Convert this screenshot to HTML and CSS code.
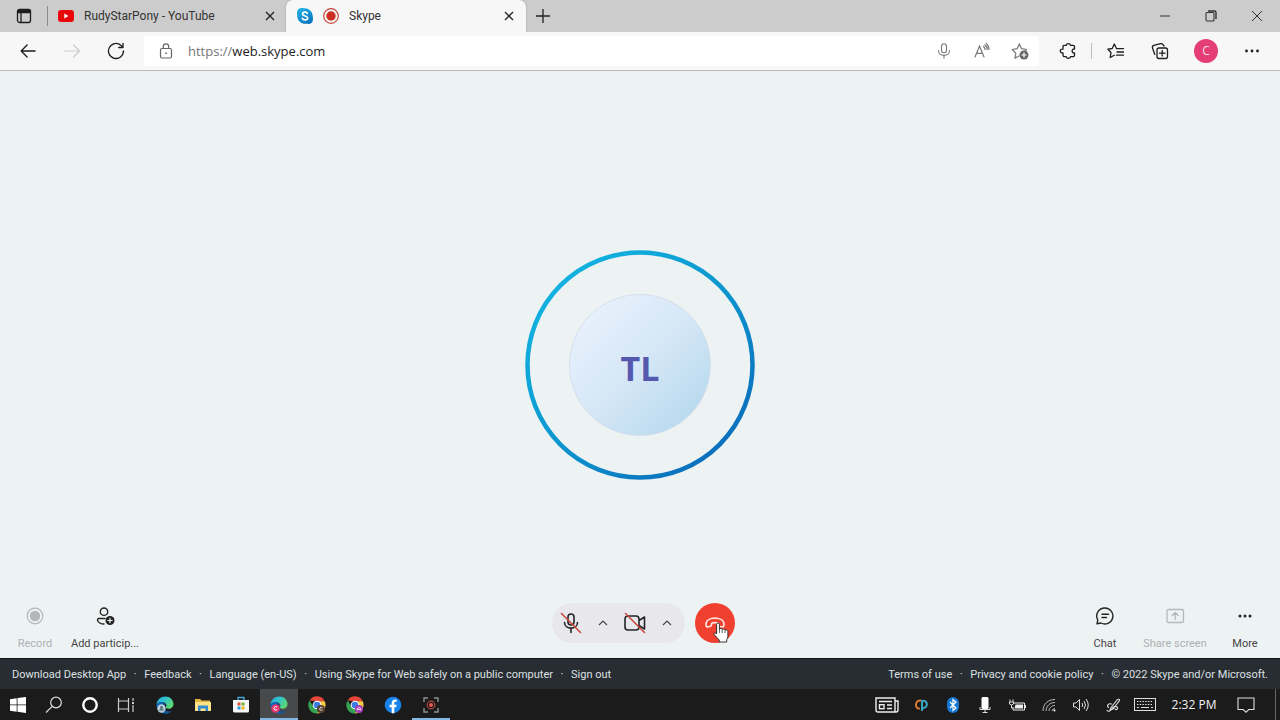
FILE: index.html
```html
<!DOCTYPE html>
<html lang="en">
<head>
<meta charset="utf-8">
<title>Skype</title>
<link rel="stylesheet" href="styles.css">
</head>
<body>
<svg class="defs" aria-hidden="true">
  <defs>
    <linearGradient id="gRing" x1="0.1" y1="0.1" x2="0.85" y2="0.9"><stop offset="0" stop-color="#12b4e2"/><stop offset="0.5" stop-color="#0c97cf"/><stop offset="1" stop-color="#0b6fbd"/></linearGradient>
    <linearGradient id="gSkype" x1="0" y1="0" x2="0.6" y2="1"><stop offset="0" stop-color="#27b5ea"/><stop offset="1" stop-color="#0878c0"/></linearGradient>
    <linearGradient id="gEdge" x1="0" y1="0" x2="1" y2="0.5"><stop offset="0" stop-color="#28a8e0"/><stop offset="0.5" stop-color="#2fc3cf"/><stop offset="1" stop-color="#5bd873"/></linearGradient>
    <symbol id="edge" viewBox="0 0 18 18">
      <path d="M.5 8.5C1 3.8 4.700.5 9.200.5c5 0 8.300 3.600 8.300 7.400 0 3-2.200 4.800-4.900 4.800-2.300 0-3.200-.9-2.600-1.900.6-1.100.5-2.200-.2-3.100C8 5.300 3.500 5.100.5 8.500z" fill="url(#gEdge)"/>
      <path d="M.5 8.500C2 5.800 6 5 8.500 7c-3 1.500-3.500 8 2 9.200 2.300.5 4-.2 5.700-1.500C14 17.200 11.500 17.700 9 17.500 4 17 .3 13.300.5 8.500z" fill="#0f66b8"/>
      <path d="M8.500 7c-3.300 2-3 8.300 2.500 9.400 2.200.3 4-.5 5.300-1.800-4.500 1.800-8.600-.2-7.700-3.900.2-1.300 1-2.200-.1-3.700z" fill="#174b92"/>
    </symbol>
    <symbol id="chrome" viewBox="0 0 18 18">
      <path d="M1.600 4.600A8.500 8.500 0 0 1 16.700 5.300H9z" fill="#e5483b"/>
      <path d="M16.700 5.300A8.500 8.500 0 0 1 8.800 17.500L12.500 11 9 5.300z" fill="#f7cb42"/>
      <path d="M1.600 4.600A8.500 8.500 0 0 0 8.800 17.500l3.700-6.500-7 0z" fill="#35a352"/>
      <circle cx="9" cy="9" r="4.300" fill="#fff"/><circle cx="9" cy="9" r="3.300" fill="#3c7de0"/>
    </symbol>
  </defs>
</svg>

<header class="browser">
  <div class="tabs">
    <button class="tab-actions" aria-label="Tab actions"><svg width="16" height="16" viewBox="0 0 16 16" fill="none" stroke="#1d1d1d" stroke-width="1.300"><rect x="1.500" y="1.500" width="13" height="13" rx="2"/><path d="M1.500 3.500h13" stroke-width="3.500"/><path d="M5 5v9.500"/></svg></button>
    <div class="tab">
      <svg width="16" height="12" viewBox="0 0 16 12"><rect width="16" height="12" rx="3" fill="#e8090d"/><path d="M6.300 3.500v5L10.500 6z" fill="#fff"/></svg>
      <span class="tab-title">RudyStarPony - YouTube</span>
      <button class="tab-close" aria-label="Close tab"><svg width="10" height="10" viewBox="0 0 10 10" stroke="#222" stroke-width="1.300"><path d="M1 1l8 8M9 1L1 9"/></svg></button>
    </div>
    <div class="tab tab-active">
      <svg width="16" height="16" viewBox="0 0 16 16"><path d="M0 4.500C0 2 2 0 4.500 0 5.500 0 6 .2 7 .2 12 0 16 3.500 15.800 9c.2.8.2 1.500.2 2.500 0 2.500-2 4.500-4.500 4.500-1 0-1.500-.2-2.500-.2C4 16 0 12.500.2 7 0 6 0 5.500 0 4.500z" fill="url(#gSkype)"/><path d="M10.400 5.500C9.800 3.500 5.500 3.500 5.500 6c0 2.500 5.200 1.500 5.200 4 0 2.400-4.700 2.500-5.400.3" fill="none" stroke="#fff" stroke-width="1.700" stroke-linecap="round"/></svg>
      <svg class="recording" width="16" height="16" viewBox="0 0 16 16"><circle cx="8" cy="8" r="7.300" fill="none" stroke="#c4473c" stroke-width="1.200"/><circle cx="8" cy="8" r="4.700" fill="#cd2e22"/></svg>
      <span class="tab-title">Skype</span>
      <button class="tab-close" aria-label="Close tab"><svg width="10" height="10" viewBox="0 0 10 10" stroke="#222" stroke-width="1.300"><path d="M1 1l8 8M9 1L1 9"/></svg></button>
    </div>
    <button class="new-tab" aria-label="New tab"><svg width="14" height="14" viewBox="0 0 14 14" stroke="#222" stroke-width="1.300"><path d="M7 0v14M0 7h14"/></svg></button>
    <div class="window-buttons">
      <button aria-label="Minimize"><svg width="12" height="12" viewBox="0 0 12 12" stroke="#333"><path d="M1 6h10"/></svg></button>
      <button aria-label="Restore"><svg width="12" height="12" viewBox="0 0 12 12" fill="none" stroke="#333" stroke-width="1.100"><rect x="1" y="2.500" width="8" height="8.500" rx="1"/><path d="M3 1h6.500Q11 1 11 2.500V9" stroke-width="1.400"/></svg></button>
      <button aria-label="Close window"><svg width="12" height="12" viewBox="0 0 12 12" stroke="#333"><path d="M1 1l10 10M11 1L1 11"/></svg></button>
    </div>
  </div>
  <nav class="toolbar" aria-label="Browser toolbar">
    <button class="tool" aria-label="Back"><svg width="16" height="16" viewBox="0 0 18 18" fill="none" stroke="#1d1d1d" stroke-width="1.500" stroke-linecap="round" stroke-linejoin="round"><path d="M17 9H1.500M8 2.200L1.300 9 8 15.800"/></svg></button>
    <button class="tool" aria-label="Forward" disabled><svg width="18" height="18" viewBox="0 0 18 18" fill="none" stroke="#cdcdcd" stroke-width="1.200" stroke-linecap="round" stroke-linejoin="round"><path d="M1.500 9h15M10.500 3l6 6-6 6"/></svg></button>
    <button class="tool" aria-label="Refresh"><svg width="18" height="18" viewBox="0 0 18 18" fill="none" stroke="#1d1d1d" stroke-width="1.300" stroke-linecap="round" stroke-linejoin="round"><path d="M16.500 9A7.500 7.500 0 1 1 14 3.400L16 5.500M16 1.300v4.200h-4.300"/></svg></button>
    <div class="address">
      <button class="lock" aria-label="Site information"><svg width="14" height="16" viewBox="0 0 14 16" fill="none" stroke="#666" stroke-width="1.200"><rect x="1.500" y="5.500" width="11" height="9.500" rx="1.500"/><path d="M4.300 5.500V3.500a2.700 2.700 0 0 1 5.400 0v2"/><circle cx="7" cy="10.200" r=".9" fill="#666" stroke="none"/></svg></button>
      <a class="url" href="#"><span class="scheme">https://</span>web.skype.com</a>
      <button aria-label="Voice search"><svg width="14" height="16" viewBox="0 0 14 16" fill="none" stroke="#777" stroke-width="1.100" stroke-linecap="round"><rect x="4.500" y=".8" width="5" height="9" rx="2.500"/><path d="M1.500 7.500c0 6.500 11 6.500 11 0M7 12.500v2.800"/></svg></button>
      <button aria-label="Read aloud"><svg width="16" height="16" viewBox="0 0 16 16" fill="none" stroke="#777" stroke-width="1.200" stroke-linecap="round"><path d="M1 14L5.500 3 10 14M2.500 10.300h6M9.500 3.500c1 .8 1.500 1.800 1.500 3M10.800 1.800c1.600 1.300 2.300 2.800 2.300 4.800M12.300.5C14 2 15 4 15 6.500"/></svg></button>
      <button aria-label="Add to favorites"><svg width="18" height="18" viewBox="0 0 18 18" fill="none" stroke="#777" stroke-width="1.200" stroke-linejoin="round"><path d="M8.300 13.800L4 16.200l.8-5.100L1.200 7.500l4.900-.8L8.300 1.900l2.200 4.800 5 .8-1.500 1.700"/><circle cx="13" cy="13" r="4.500" fill="#666" stroke="none"/><path d="M13 10.500v5M10.500 13h5" stroke="#fff"/></svg></button>
    </div>
    <button class="tool" aria-label="Extensions"><svg width="18" height="18" viewBox="0 0 18 18" fill="none" stroke="#1d1d1d" stroke-width="1.300" stroke-linejoin="round"><path d="M5 3.300h2.200a2.200 2.200 0 0 1 4.300 0H14a1.500 1.500 0 0 1 1.500 1.500v2.300c-3.200-.8-3.200 4.600 0 3.800v2.300a1.500 1.500 0 0 1-1.500 1.500h-2.500a2.200 2.200 0 0 1-4.300 0H5.500A1.500 1.500 0 0 1 4 13.200v-2.300c-3.600.4-3.600-4.200 0-3.800V4.800Q4 3.300 5 3.300z"/></svg></button>
    <span class="divider"></span>
    <button class="tool" aria-label="Favorites"><svg width="18" height="18" viewBox="0 0 18 18" fill="none" stroke="#1d1d1d" stroke-width="1.300" stroke-linejoin="round" stroke-linecap="round"><path d="M9.500 6.500L7.300 2 5.200 6.500.9 7.200 4 10.500 3.200 15.500 7.300 13.300M9.500 6.700h7M10 10h6.500M9.500 13.200h7"/></svg></button>
    <button class="tool" aria-label="Collections"><svg width="18" height="18" viewBox="0 0 18 18" fill="none" stroke="#1d1d1d" stroke-width="1.300" stroke-linejoin="round" stroke-linecap="round"><rect x="6" y="6" width="10.500" height="10.500" rx="2"/><path d="M11.200 8.500v5.500M8.500 11.200H14M3.800 12.500L1.500 6Q1 4 2.800 3.300L9.500 1.600Q11 1.300 12 2.600L13 4"/></svg></button>
    <button class="tool profile" aria-label="Profile"><span class="profile-letter">C</span></button>
    <button class="tool" aria-label="Settings and more"><svg width="16" height="4" viewBox="0 0 16 4" fill="#1d1d1d"><circle cx="2.500" cy="2" r="1.400"/><circle cx="8" cy="2" r="1.400"/><circle cx="13.500" cy="2" r="1.400"/></svg></button>
  </nav>
</header>

<main class="call">
  <div class="participant">
    <svg class="ring" width="230" height="230" viewBox="0 0 230 230"><circle cx="115" cy="115" r="112.500" fill="none" stroke="url(#gRing)" stroke-width="4.500"/></svg>
    <div class="initials">TL</div>
  </div>
  <div class="controls">
    <div class="actions">
      <button class="action" disabled><svg width="20" height="20" viewBox="0 0 20 20"><circle cx="10" cy="10" r="7.800" fill="none" stroke="#b5b8ba" stroke-width="1.200"/><circle cx="10" cy="10" r="5.200" fill="#b5b8ba"/></svg><span>Record</span></button>
      <button class="action"><svg width="20" height="20" viewBox="0 0 20 20" fill="none" stroke="#242424" stroke-width="1.400" stroke-linecap="round"><circle cx="9" cy="5.700" r="3.700"/><path d="M10 12.500H4C1 12.500 2.500 18 9 18"/><circle cx="15" cy="14.500" r="4.500" fill="#242424" stroke="none"/><path d="M15 12.300v4.400M12.800 14.500h4.400" stroke="#eef2f4" stroke-width="1.200"/></svg><span>Add particip...</span></button>
    </div>
    <div class="center-controls">
      <div class="pill">
        <button class="device" aria-label="Unmute"><svg width="22" height="22" viewBox="0 0 22 22" fill="none" stroke="#242424" stroke-width="1.600" stroke-linecap="round"><rect x="8" y="2" width="6" height="11" rx="3"/><path d="M4.500 10.500c0 7.500 13 7.500 13 0M11 16.500v4"/><path d="M1.500 1.500l19 19" stroke="#c9473f"/></svg></button>
        <button class="chevron" aria-label="Audio options"><svg width="10" height="6" viewBox="0 0 10 6" fill="none" stroke="#444" stroke-width="1.100"><path d="M1 5L5 1l4 4"/></svg></button>
        <button class="device" aria-label="Turn on video"><svg width="22" height="22" viewBox="0 0 22 22" fill="none" stroke="#242424" stroke-width="1.600" stroke-linejoin="round" stroke-linecap="round"><path d="M4 4h8q3 0 3 3v8q0 3-3 3H4q-3 0-3-3V7q0-3 3-3zM15 8.500l5.500-3.500v12L15 13.500"/><path d="M1.500 1.500l19 19" stroke="#c9473f"/></svg></button>
        <button class="chevron" aria-label="Video options"><svg width="10" height="6" viewBox="0 0 10 6" fill="none" stroke="#444" stroke-width="1.100"><path d="M1 5L5 1l4 4"/></svg></button>
      </div>
      <button class="hangup" aria-label="End call"><svg width="20" height="12" viewBox="0 0 20 12" fill="none" stroke="#ffe3dd" stroke-width="1.700" stroke-linejoin="round"><path d="M1 7.500C1 3 5.500 1.200 10 1.200S19 3 19 7.500c0 3-1.600 2.700-4.500 1.700-1.300-.5-.8-2.200-1.300-3-.7-.8-5.700-.8-6.400 0-.5.8 0 2.500-1.300 3C2.600 10.200 1 10.500 1 7.500z"/></svg>
        <svg class="pointer" width="17" height="21" viewBox="0 0 17 21"><path d="M3.600 12V2.300C3.600.5 6.400.5 6.400 2.300V7.200C7 6 9 6.200 9.200 7.500 10 6.500 11.800 7 12 8.300c1-1 2.800-.4 2.900 1.200v4.700c0 1.600-.5 2.300-1.200 3.400V20H6.200v-2L1.300 12.700C.2 11 2 9.900 3.600 12z" fill="#fff" stroke="#222" stroke-width=".9" stroke-linejoin="round"/><path d="M6.400 7v4M9.200 8v3M12 8.500V11" stroke="#333" stroke-width=".8"/></svg>
      </button>
    </div>
    <div class="actions actions-end">
      <button class="action"><svg width="20" height="20" viewBox="0 0 20 20" fill="none" stroke="#242424" stroke-width="1.400" stroke-linecap="round" stroke-linejoin="round"><path d="M10 2a8 8 0 1 1-4 15l-4 .8L2.800 14A8 8 0 0 1 10 2zM7 8.300h6.500M7 11.500h4.500"/></svg><span>Chat</span></button>
      <button class="action" disabled><svg width="20" height="20" viewBox="0 0 20 20" fill="none" stroke="#b5b8ba" stroke-width="1.300" stroke-linecap="round" stroke-linejoin="round"><rect x="2" y="3.500" width="16.500" height="13" rx="1.500"/><path d="M10.200 13.500V6.500M7.200 9.500l3-3 3 3"/></svg><span>Share screen</span></button>
      <button class="action"><svg width="20" height="20" viewBox="0 0 20 20" fill="#242424"><circle cx="5" cy="10" r="1.500"/><circle cx="10" cy="10" r="1.500"/><circle cx="15" cy="10" r="1.500"/></svg><span>More</span></button>
    </div>
  </div>
</main>

<footer class="links">
  <ul>
    <li><a href="#">Download Desktop App</a></li><li><a href="#">Feedback</a></li><li><a href="#">Language (en-US)</a></li><li><a href="#">Using Skype for Web safely on a public computer</a></li><li><a href="#">Sign out</a></li>
  </ul>
  <ul>
    <li><a href="#">Terms of use</a></li><li><a href="#">Privacy and cookie policy</a></li><li>© 2022 Skype and/or Microsoft.</li>
  </ul>
</footer>

<nav class="taskbar" aria-label="Taskbar">
  <div class="system">
    <button aria-label="Start"><svg width="16" height="16" viewBox="0 0 16 16" fill="#fff"><path d="M0 2.200l6.700-1v6.300H0zM7.500 1.100L16 0v7.500H7.500zM0 8.300h6.700v6.400l-6.700-1zM7.500 8.300H16V16l-8.500-1.200z"/></svg></button>
    <button aria-label="Search"><svg width="18" height="18" viewBox="0 0 18 18" fill="none" stroke="#ddd" stroke-width="1.200"><circle cx="11" cy="6.500" r="5.300"/><path d="M7.200 10.300L1 16.500"/></svg></button>
    <button aria-label="Cortana"><svg width="16" height="16" viewBox="0 0 16 16"><circle cx="8" cy="8" r="6.700" fill="none" stroke="#fff" stroke-width="2.400"/></svg></button>
    <button aria-label="Task view"><svg width="18" height="16" viewBox="0 0 18 16" fill="none" stroke="#ccc" stroke-width="1.200"><path d="M1.500 1v3h10V1M1.500 15v-3h10v3M1.500 4v8M11.500 4v8M16 1v3M16 8v7"/><path d="M16 5v2" stroke-width="2"/></svg></button>
  </div>
  <div class="apps">
    <button aria-label="Edge"><svg width="18" height="18" viewBox="0 0 18 18"><use href="#edge"/><circle cx="5.500" cy="12.500" r="4.200" fill="#b9cfd8"/><circle cx="5.500" cy="11.500" r="1.500" fill="#596c78"/><path d="M2.800 14.500c1-2 4.400-2 5.400 0" fill="#596c78"/></svg></button>
    <button aria-label="File Explorer"><svg width="16" height="14" viewBox="0 0 16 14"><path d="M0 1h5l1.500 1.500H15V13H0z" fill="#e5b43a"/><path d="M0 4h16v9H0z" fill="#ffe18a"/><path d="M3 7.500h10V13H3z" fill="#348bd0"/><path d="M5.500 10.500h5V13h-5z" fill="#ffe18a"/></svg></button>
    <button aria-label="Microsoft Store"><svg width="16" height="17" viewBox="0 0 16 17"><path d="M5 4V1.500h6V4" fill="none" stroke="#43a8dd" stroke-width="1.300"/><path d="M0 4h16v11q0 1.500-1.500 1.500h-13Q0 16.500 0 15z" fill="#f5f7f8"/><path d="M4.500 6.500h3v3h-3z" fill="#e25032"/><path d="M8.500 6.500h3v3h-3z" fill="#77b22c"/><path d="M4.500 10.500h3v3h-3z" fill="#279fdc"/><path d="M8.500 10.500h3v3h-3z" fill="#efb51e"/></svg></button>
    <button class="current" aria-label="Edge, profile C"><svg width="18" height="18" viewBox="0 0 18 18"><use href="#edge"/><circle cx="5.500" cy="12.500" r="4.300" fill="#e2386f"/><path d="M7.200 11.200q-1.700-1.600-3 .2-.8 1.700.6 2.500 1.300.7 2.400-.5" fill="none" stroke="#fff"/></svg></button>
    <button aria-label="Chrome, profile C"><svg width="18" height="18" viewBox="0 0 18 18"><use href="#chrome"/><circle cx="13" cy="13" r="4" fill="#594030"/><path d="M14.500 11.800q-1.500-1.200-2.600.2-.7 1.500.5 2.200 1 .5 2-.4" fill="none" stroke="#ddd"/></svg></button>
    <button aria-label="Chrome, profile A"><svg width="18" height="18" viewBox="0 0 18 18"><use href="#chrome"/><circle cx="13" cy="13" r="4" fill="#a83bb7"/><path d="M11.300 14.500v-2q1.700-2 3.400 0v2M11.500 13.500h3" fill="none" stroke="#eed8f3"/></svg></button>
    <button aria-label="Facebook"><svg width="18" height="18" viewBox="0 0 18 18"><circle cx="9" cy="9" r="8.300" fill="#1783ea"/><path d="M7.700 17.300V11.200H5.500V8.700h2.200V7C7.700 4.600 9 3.400 11 3.400l1.700.2v2.200h-1c-1 0-1.400.5-1.400 1.300v1.600h2.300l-.4 2.500h-1.900v6.100z" fill="#fff"/></svg></button>
    <button class="open" aria-label="Screen recorder"><svg width="16" height="16" viewBox="0 0 16 16" fill="none"><path d="M1 5V1h4M11 1h4v4M15 11v4h-4M5 15H1v-4" stroke="#8b9290" stroke-width="1.400"/><circle cx="8" cy="8" r="3.800" stroke="#b5483e" stroke-width="1.200"/><circle cx="8" cy="8" r="2" fill="#e85d50"/></svg></button>
  </div>
  <div class="tray">
    <button class="news" aria-label="News"><svg width="24" height="16" viewBox="0 0 24 16" fill="none" stroke="#eee" stroke-width="1.400"><path d="M1 1h19v14H3q-2 0-2-2zM20 4h3v9q0 2-2 2H4"/><path d="M4 4.500h13M12 8h5M12 11.500h5"/><rect x="4.500" y="7.700" width="4.500" height="4"/></svg></button>
    <button aria-label="CP"><svg width="13" height="12" viewBox="0 0 13 12" fill="none" stroke-width="2"><path d="M6 1.500C-.5.500-.5 10.500 5 9.500" stroke="#d97a36"/><path d="M7 12V2c6.500-1.500 6.500 8 0 7" stroke="#39a5bd"/></svg></button>
    <button aria-label="Bluetooth"><svg width="12" height="16" viewBox="0 0 12 16"><rect width="12" height="16" rx="6" fill="#1778d2"/><path d="M3 5l6 6-3 2.500v-11L9 5l-6 6" fill="none" stroke="#fff" stroke-width="1.200"/></svg></button>
    <button aria-label="Microphone in use"><svg width="12" height="16" viewBox="0 0 12 16"><rect x="2.500" width="7" height="12" rx="1.500" fill="#fff"/><path d="M1 10v2.500h10V10M6 13v2.500M3.500 15.500h5" fill="none" stroke="#ddd"/></svg></button>
    <button aria-label="Battery"><svg width="17" height="12" viewBox="0 0 17 12"><path d="M5 4h10.500v7H4V8" fill="none" stroke="#eee"/><path d="M6.500 5.500H14v4H5.500z" fill="#eee"/><path d="M16.500 6v3M1 .5V3M4 .5V3M.5 3h4v2q-2 2-4 0zM2.500 6v3H4" fill="none" stroke="#ddd"/></svg></button>
    <button aria-label="Wi-Fi"><svg width="14" height="14" viewBox="0 0 14 14" fill="none" stroke="#bbb"><path d="M1 13C1 6 6 1.500 13 1.500M4 13c0-5 4-8.500 9-8.500M7 13c0-3 2.500-5.500 6-5.500M10 13q0-2 3-2.500"/><circle cx="12.500" cy="12.500" r="1" fill="#fff" stroke="none"/></svg></button>
    <button aria-label="Volume"><svg width="16" height="14" viewBox="0 0 16 14" fill="none" stroke="#ddd"><path d="M.5 5H3l3.500-3.500v11L3 9H.5zM9 5q1.500 2 0 4M11 3q3 4 0 8M13 1q4.500 6 0 12"/></svg></button>
    <button aria-label="Pen"><svg width="15" height="14" viewBox="0 0 15 14" fill="none" stroke="#ddd" stroke-width="1.100" stroke-linecap="round"><path d="M5 9.500L11.500 1.500q2-.8 2 1L7 11 4 12zM5.500 6C2 5 .5 8 2.500 9.500M1 12.500c2 1.500 3.500.5 5-2 1-2 3.500-3 5-1.500s-.5 3.500-2 2"/></svg></button>
    <button aria-label="Touch keyboard"><svg width="22" height="13" viewBox="0 0 22 13" fill="none" stroke="#ddd"><rect x=".5" y=".5" width="21" height="12"/><path d="M3 3.500h16M3 6.500h16" stroke-dasharray="1.500 1.200"/><path d="M3 9.500h2M7 9.500h8M17 9.500h2"/></svg></button>
    <button class="clock">2:32 PM</button>
    <button class="notifications" aria-label="Notifications"><svg width="18" height="16" viewBox="0 0 18 16" fill="none" stroke="#ddd" stroke-width="1.100"><path d="M1 1h16v11.500h-5.200L9 15.200l-2.800-2.700H1z"/></svg></button>
    <button class="show-desktop" aria-label="Show desktop"></button>
  </div>
</nav>
</body>
</html>
```
FILE: styles.css
```css
* { box-sizing: border-box; }

body {
  margin: 0;
  min-height: 100vh;
  display: flex;
  flex-direction: column;
  font: 12px/16px "Open Sans", "Noto Sans", sans-serif;
  color: #242424;
  background: #edf2f3;
}

button {
  display: flex;
  align-items: center;
  justify-content: center;
  flex: none;
  margin: 0;
  padding: 0;
  border: 0;
  background: none;
  color: inherit;
  font: inherit;
}

a { color: inherit; text-decoration: none; }
svg { display: block; flex: none; }
.defs { position: absolute; width: 0; height: 0; }

/* Browser tabs */
.tabs { display: flex; height: 32px; background: #cccccc; }
.tab-actions { width: 48px; }
.tab {
  display: flex;
  align-items: center;
  width: 238px;
  padding: 0 10px;
  color: #333;
}
.tab:not(.tab-active)::before {
  content: "";
  width: 1px;
  height: 20px;
  margin: 0 10px 0 -11px;
  background: #8c8c8c;
}
.tab-active {
  width: 240px;
  padding: 0 11px;
  background: #f7f7f7;
  border-radius: 7px 7px 0 0;
  box-shadow: 0 0 2px #999;
  clip-path: inset(0 -2px);
}
.recording { margin-left: 10px; }
.tab-title { flex: 1; margin-left: 10px; font-family: Roboto, sans-serif; white-space: nowrap; }
.tab-close { width: 12px; height: 20px; }
.new-tab { width: 34px; }
.window-buttons { display: flex; margin-left: auto; }
.window-buttons button { width: 46px; }

/* Browser toolbar */
.toolbar {
  display: flex;
  align-items: center;
  height: 39px;
  padding: 0 6px;
  background: #f7f7f7;
  border-bottom: 1px solid #b9bbbb;
}
.tool { width: 44px; height: 30px; }
.address {
  flex: 1;
  display: flex;
  align-items: center;
  height: 30px;
  margin: 0 7px 0 6px;
  background: #fff;
  border-radius: 4px;
  font-size: 13px;
}
.address button { width: 38px; height: 30px; }
.address .lock { width: 44px; }
.url { flex: 1; color: #222; }
.scheme { color: #767676; }
.divider { width: 1px; height: 16px; margin: 0 2px 0 1px; background: #bbb; }
.profile { width: 48px; }
.profile-letter {
  width: 24px;
  height: 24px;
  border-radius: 50%;
  background: #e53e76;
  color: #fbdbe6;
  line-height: 24px;
}

/* Call stage */
.call {
  flex: 1;
  display: grid;
  grid-template-rows: 1fr auto 1fr;
}
.participant {
  grid-row: 2;
  justify-self: center;
  display: grid;
  place-items: center;
}
.ring, .initials { grid-area: 1 / 1; }
.initials {
  width: 142px;
  height: 142px;
  border: 1px solid #d5dfee;
  border-radius: 50%;
  background: linear-gradient(135deg, #e9f1fd 10%, #d5e7f6 50%, #b7d9ee 90%);
  color: #5558af;
  font-size: 34px;
  font-weight: 700;
  line-height: 146px;
  text-align: center;
}
.controls {
  grid-row: 3;
  align-self: end;
  display: grid;
  grid-template-columns: 1fr auto 1fr;
  align-items: center;
  height: 70px;
}
.actions { display: flex; padding-top: 12px; font-family: Roboto, sans-serif; font-size: 11px; }
.actions-end { justify-content: flex-end; }
.action {
  flex-direction: column;
  width: 70px;
  gap: 10px;
  color: #444;
  white-space: nowrap;
}
.action:disabled { color: #aeb1b3; }
.center-controls {
  display: flex;
  gap: 10px;
  padding-left: 7px;
}
.pill {
  display: flex;
  height: 40px;
  padding: 0 3px 0 2px;
  border-radius: 20px;
  background: #e8e8ec;
}
.device { width: 34px; }
.chevron { width: 30px; }
.hangup {
  position: relative;
  width: 40px;
  height: 40px;
  border-radius: 50%;
  background: #ef4030;
}
.pointer { position: absolute; left: 18px; top: 19px; }

/* Page footer */
.links {
  display: flex;
  justify-content: space-between;
  align-items: center;
  height: 31px;
  padding: 2px 12px 0;
  background: #282d33;
  border-top: 1px solid #14181d;
  color: #dde0e2;
  font-family: Roboto, sans-serif;
  font-size: 11px;
}
.links ul { display: flex; margin: 0; padding: 0; list-style: none; white-space: nowrap; }
.links li { display: flex; }
.links li + li::before { content: "·"; width: 18px; text-align: center; }

/* Taskbar */
.taskbar { display: flex; height: 31px; background: #1b1b1b; color: #f2f2f2; }
.taskbar > div { display: flex; }
.system button { width: 36px; }
.apps { margin-left: 2px; }
.apps button { width: 38px; border-bottom: 2px solid transparent; border-top: 2px solid transparent; }
.apps .current { background: #48494b; border-color: #48494b #48494b #82b8e3; }
.apps .open { border-bottom-color: #82b8e3; }
.tray { margin-left: auto; }
.tray button { width: 32px; }
.tray .news { width: 36px; }
.tray .clock { width: 66px; }
.tray .notifications { width: 38px; }
.tray .show-desktop { width: 5px; margin-left: 10px; border-left: 1px solid #666; }
```
